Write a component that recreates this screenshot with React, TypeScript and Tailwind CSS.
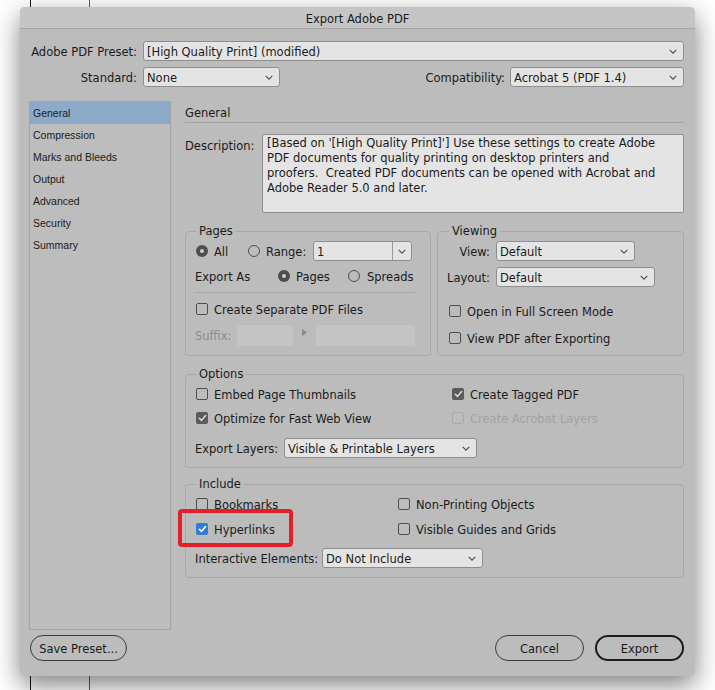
import React from "react";

function Chevron() {
  return (
    <svg width="8" height="5" viewBox="0 0 8 5" className="shrink-0">
      <path d="M0.7 0.8 L4 4.1 L7.3 0.8" fill="none" stroke="#4d4d4d" strokeWidth="1.1" />
    </svg>
  );
}

function Select({ value, className = "" }: { value: string; className?: string }) {
  return (
    <div
      className={`flex h-[20px] items-center justify-between rounded-[3px] border border-[#8e8e8e] bg-[#e4e4e4] pl-[3px] pr-[6px] ${className}`}
    >
      <span className="truncate pt-px">{value}</span>
      <Chevron />
    </div>
  );
}

function Check({ checked = false, blue = false, disabled = false }: { checked?: boolean; blue?: boolean; disabled?: boolean }) {
  if (checked) {
    return (
      <span
        className={`flex h-[12px] w-[12px] shrink-0 items-center justify-center rounded-[2px] ${blue ? "bg-[#2f7dd9]" : "bg-[#5a5a5a]"}`}
      >
        <svg width="9" height="8" viewBox="0 0 9 8">
          <path
            d="M1.4 4.3 L3.6 6.3 L7.6 1.5"
            fill="none"
            stroke={blue ? "#ffffff" : "#d6d6d6"}
            strokeWidth="1.6"
            strokeLinecap="round"
            strokeLinejoin="round"
          />
        </svg>
      </span>
    );
  }
  return (
    <span
      className={`h-[12px] w-[12px] shrink-0 rounded-[2px] border ${disabled ? "border-[#a9a9a9]" : "border-[#4f4f4f]"}`}
    />
  );
}

function Radio({ on = false }: { on?: boolean }) {
  if (on) {
    return (
      <span className="flex h-[12px] w-[12px] shrink-0 items-center justify-center rounded-full bg-[#4e4e4e]">
        <span className="h-[4px] w-[4px] rounded-full bg-[#cfcfcf]" />
      </span>
    );
  }
  return <span className="h-[12px] w-[12px] shrink-0 rounded-full border border-[#4f4f4f]" />;
}

function CheckItem({
  label,
  checked,
  blue,
  disabled,
}: {
  label: string;
  checked?: boolean;
  blue?: boolean;
  disabled?: boolean;
}) {
  return (
    <div className="flex items-center">
      <Check checked={checked} blue={blue} disabled={disabled} />
      <span className={`ml-[6px] whitespace-nowrap pt-px ${disabled ? "text-[#a2a2a2]" : ""}`}>{label}</span>
    </div>
  );
}

export default function App() {
  const sideItems = ["General", "Compression", "Marks and Bleeds", "Output", "Advanced", "Security", "Summary"];
  return (
    <div className="relative h-[690px] w-[715px] overflow-hidden bg-white pl-[20px] pt-[7px] font-['DejaVu_Sans',sans-serif] text-[11.5px] leading-[14px] text-[#1b1b1b]">
      <div className="absolute left-[30px] top-0 h-full w-px bg-[#111111]" />
      <div className="absolute left-[89px] top-0 h-full w-px bg-[#8a2fc8]" />

      <div className="relative flex h-[669px] w-[675px] flex-col rounded-[5px] bg-[#bcbcbc] shadow-[0_9px_26px_rgba(0,0,0,0.5)]">
        {/* Title bar */}
        <div className="flex h-[22px] items-center justify-center rounded-t-[5px] border-b border-[#a6a6a6] bg-[#c5c5c5] pt-[2px]">
          Export Adobe PDF
        </div>

        <div className="flex flex-1 flex-col pl-[9px] pr-[11px]">
          {/* Preset */}
          <div className="mt-[12px] flex h-[20px] items-center">
            <span className="w-[108px] whitespace-nowrap pt-px text-right">Adobe PDF Preset:</span>
            <Select value="[High Quality Print] (modified)" className="ml-[6px] flex-1" />
          </div>
          {/* Standard / Compatibility */}
          <div className="mt-[6px] flex h-[20px] items-center">
            <span className="w-[108px] pt-px text-right">Standard:</span>
            <Select value="None" className="ml-[6px] w-[137px]" />
            <div className="flex-1" />
            <span className="pt-px">Compatibility:</span>
            <Select value="Acrobat 5 (PDF 1.4)" className="ml-[5px] w-[174px]" />
          </div>

          {/* Sidebar + content */}
          <div className="mt-[14px] flex h-[529px]">
            <div className="w-[142px] border border-[#a5a5a5] bg-[#bdbdbd] font-['Liberation_Sans',sans-serif] text-[10.5px]">
              {sideItems.map((s, i) => (
                <div
                  key={s}
                  className={`h-[22px] pl-[3px] leading-[22px] ${i === 0 ? "bg-[#8eaacb]" : ""}`}
                >
                  {s}
                </div>
              ))}
            </div>

            <div className="ml-[14px] flex min-w-0 flex-1 flex-col">
              <div className="flex h-[22px] items-center border-b border-[#a4a4a4] pt-[2px]">General</div>

              {/* Description */}
              <div className="mt-[11px] flex">
                <span className="w-[77px] pt-[5px]">Description:</span>
                <div className="h-[79px] flex-1 whitespace-pre rounded-[2px] border border-[#8e8e8e] bg-[#e4e4e4] pl-[4px] pt-[1px] leading-[15px]">
                  <div>[Based on '[High Quality Print]'] Use these settings to create Adobe</div>
                  <div>PDF documents for quality printing on desktop printers and</div>
                  <div>proofers.  Created PDF documents can be opened with Acrobat and</div>
                  <div>Adobe Reader 5.0 and later.</div>
                </div>
              </div>

              {/* Pages + Viewing */}
              <div className="mt-[11px] flex gap-[6px]">
                <fieldset className="w-[246px] min-w-0 rounded-[4px] border border-[#a8a8a8] pb-[9px] pl-[9px] pr-[15px]">
                  <legend className="ml-[1px] px-[3px] leading-[14px]">Pages</legend>
                  <div className="mt-[3px] flex h-[20px] items-center pl-[1px]">
                    <div className="flex w-[52px] items-center">
                      <Radio on />
                      <span className="ml-[6px] pt-px">All</span>
                    </div>
                    <div className="flex w-[65px] items-center">
                      <Radio />
                      <span className="ml-[6px] pt-px">Range:</span>
                    </div>
                    <div className="flex h-[20px] w-[99px] rounded-[3px] border border-[#8e8e8e] bg-[#e4e4e4]">
                      <span className="flex flex-1 items-center pl-[3px] pt-px">1</span>
                      <span className="flex w-[19px] items-center justify-center border-l border-[#9a9a9a]">
                        <Chevron />
                      </span>
                    </div>
                  </div>
                  <div className="mt-[5px] flex h-[20px] items-center">
                    <span className="w-[83px] pt-px">Export As</span>
                    <div className="flex w-[70px] items-center">
                      <Radio on />
                      <span className="ml-[6px] pt-px">Pages</span>
                    </div>
                    <div className="flex items-center">
                      <Radio />
                      <span className="ml-[7px] pt-px">Spreads</span>
                    </div>
                  </div>
                  <div className="mt-[6px] h-px bg-[#a6a6a6]" />
                  <div className="mt-[6px] flex h-[20px] items-center pl-[1px]">
                    <CheckItem label="Create Separate PDF Files" />
                  </div>
                  <div className="mt-[6px] flex h-[21px] items-center">
                    <span className="w-[42px] pt-px text-[#8d8d8d]">Suffix:</span>
                    <div className="h-[21px] w-[56px] rounded-[2px] bg-[#c4c4c4]" />
                    <div className="flex w-[23px] items-center justify-center pb-[6px]">
                      <svg width="5" height="7" viewBox="0 0 5 7">
                        <path d="M0 0 L5 3.5 L0 7 Z" fill="#8a8a8a" />
                      </svg>
                    </div>
                    <div className="h-[21px] flex-1 rounded-[2px] bg-[#c4c4c4]" />
                  </div>
                </fieldset>

                <fieldset className="min-w-0 flex-1 rounded-[4px] border border-[#a8a8a8] pb-[7px] pl-[9px] pr-[10px]">
                  <legend className="ml-[2px] px-[3px] leading-[14px]">Viewing</legend>
                  <div className="mt-[3px] flex h-[20px] items-center">
                    <span className="w-[43px] pt-px text-right">View:</span>
                    <Select value="Default" className="ml-[6px] w-[139px]" />
                  </div>
                  <div className="mt-[6px] flex h-[20px] items-center">
                    <span className="w-[43px] whitespace-nowrap pt-px text-right">Layout:</span>
                    <Select value="Default" className="ml-[6px] w-[159px]" />
                  </div>
                  <div className="mt-[14px] flex h-[20px] items-center pl-[2px]">
                    <CheckItem label="Open in Full Screen Mode" />
                  </div>
                  <div className="mt-[7px] flex h-[20px] items-center pl-[2px]">
                    <CheckItem label="View PDF after Exporting" />
                  </div>
                </fieldset>
              </div>

              {/* Options */}
              <fieldset className="mt-[11px] min-w-0 rounded-[4px] border border-[#a8a8a8] pb-[9px] pl-[9px] pr-[10px]">
                <legend className="ml-[1px] px-[3px] leading-[14px]">Options</legend>
                <div className="mt-[3px] flex h-[20px] items-center pl-[1px]">
                  <div className="w-[256px]">
                    <CheckItem label="Embed Page Thumbnails" />
                  </div>
                  <CheckItem label="Create Tagged PDF" checked />
                </div>
                <div className="mt-[4px] flex h-[20px] items-center pl-[1px]">
                  <div className="w-[256px]">
                    <CheckItem label="Optimize for Fast Web View" checked />
                  </div>
                  <CheckItem label="Create Acrobat Layers" disabled />
                </div>
                <div className="mt-[10px] flex h-[20px] items-center">
                  <span className="w-[89px] whitespace-nowrap pt-px">Export Layers:</span>
                  <Select value="Visible & Printable Layers" className="w-[193px]" />
                </div>
              </fieldset>

              {/* Include */}
              <fieldset className="mt-[9px] min-w-0 rounded-[4px] border border-[#a8a8a8] pb-[9px] pl-[9px] pr-[10px]">
                <legend className="ml-[1px] px-[3px] leading-[14px]">Include</legend>
                <div className="mt-[3px] flex h-[20px] items-center pl-[1px]">
                  <div className="w-[202px]">
                    <CheckItem label="Bookmarks" />
                  </div>
                  <CheckItem label="Non-Printing Objects" />
                </div>
                <div className="relative mt-[5px] flex h-[20px] items-center pl-[1px]">
                  <div className="w-[202px]">
                    <CheckItem label="Hyperlinks" checked blue />
                  </div>
                  <CheckItem label="Visible Guides and Grids" />
                  <div className="pointer-events-none absolute left-[-17px] top-[-10px] h-[38px] w-[115px] rounded-[4px] border-[4px] border-[#e3202a]" />
                </div>
                <div className="mt-[9px] flex h-[20px] items-center">
                  <span className="w-[127px] whitespace-nowrap pt-px">Interactive Elements:</span>
                  <Select value="Do Not Include" className="w-[161px]" />
                </div>
              </fieldset>
            </div>
          </div>

          {/* Buttons */}
          <div className="mt-[5px] flex h-[26px] items-center">
            <div className="ml-[1px] flex h-[26px] w-[97px] items-center justify-center rounded-full border border-[#3a3a3a] pt-px">
              Save Preset...
            </div>
            <div className="flex-1" />
            <div className="flex h-[26px] w-[89px] items-center justify-center rounded-full border border-[#3a3a3a] pt-px">
              Cancel
            </div>
            <div className="ml-[11px] flex h-[26px] w-[89px] items-center justify-center rounded-full border-2 border-[#1c1c1c] pt-px">
              Export
            </div>
          </div>
        </div>
      </div>
    </div>
  );
}
